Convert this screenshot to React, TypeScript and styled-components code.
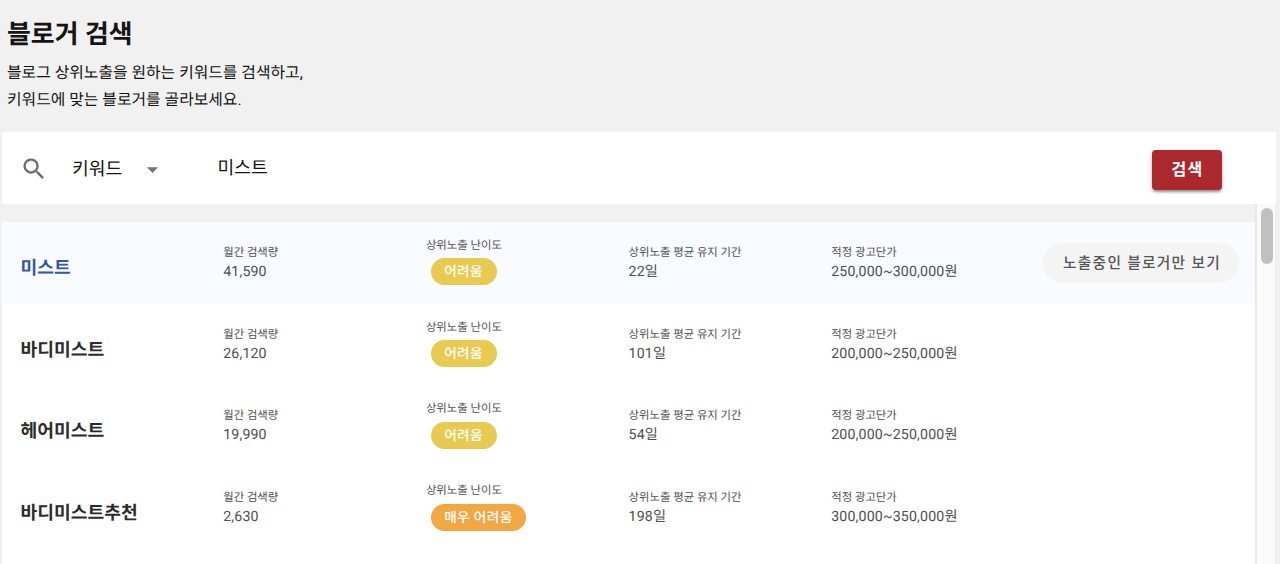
import React from "react";
import styled, { createGlobalStyle } from "styled-components";

const Global = createGlobalStyle`
  * { box-sizing: border-box; }
  html, body { margin: 0; height: 100%; overflow: hidden; background: #f1f1f1; }
  body {
    font-family: Roboto, "Noto Sans CJK KR", sans-serif;
    color: #151515;
    text-rendering: geometricPrecision;
  }
`;

const Page = styled.main`
  height: 564px;
  display: flex;
  flex-direction: column;
  padding: 0 4px 0 2px;
  overflow: hidden;
`;

const Header = styled.header`
  flex: none;
  height: 132px;
  padding: 16px 0 0 5px;
`;

const Title = styled.h1`
  margin: 0;
  font-size: 25.9px;
  line-height: 38px;
  font-weight: 700;
`;

const Lead = styled.p`
  margin: 5px 0 0;
  font-size: 15.85px;
  line-height: 27px;
`;

const SearchBar = styled.section`
  flex: none;
  height: 72px;
  display: flex;
  align-items: center;
  padding: 0 54px 0 18px;
  background: #fff;
`;

const SearchIcon = styled.svg`
  width: 28px;
  height: 28px;
  margin-top: 2px;
  fill: #6b6b6b;
`;

const TypeSelect = styled.div`
  display: flex;
  align-items: center;
  justify-content: space-between;
  width: 94px;
  margin-left: 24px;
  padding-top: 4px;
  font-size: 18.2px;
  line-height: 28px;
`;

const Caret = styled.svg`
  width: 27px;
  height: 27px;
  margin-bottom: 2px;
  fill: #757575;
`;

const Query = styled.div`
  flex: 1;
  margin-left: 51.5px;
  padding-top: 1px;
  font-size: 18.2px;
  line-height: 28px;
`;

const SearchButton = styled.button`
  width: 70px;
  height: 40px;
  margin-top: 4px;
  padding: 0 0 0 1px;
  border: 0;
  border-radius: 4px;
  background: #ab282d;
  color: #fff;
  font: 700 16px/40px Roboto, "Noto Sans CJK KR", sans-serif;
  letter-spacing: 1.4px;
  box-shadow: 0 3px 2px -1px rgba(0, 0, 0, 0.2), 0 2px 3px rgba(0, 0, 0, 0.2), 0 1px 6px rgba(0, 0, 0, 0.12);
`;

const Results = styled.section`
  flex: 1;
  min-height: 0;
  display: flex;
  overflow: hidden;
`;

const List = styled.div`
  flex: 1;
  display: flex;
  flex-direction: column;
  padding-top: 18px;
`;

const Rows = styled.div`
  flex: 1;
  background: #fff;
`;

const ScrollTrack = styled.div`
  width: 21px;
  padding: 4px 0 0 4px;
  background: #fafafa;
  border-left: 2px solid #e8e8e8;
  border-right: 1px solid #ececec;
`;

const ScrollThumb = styled.div`
  width: 12px;
  height: 56px;
  border-radius: 6px;
  background: #c0c0c0;
`;

const Row = styled.article<{ $active?: boolean }>`
  display: grid;
  grid-template-columns: repeat(5, 202.7px) 1fr;
  align-items: center;
  height: 81.75px;
  padding: 0 16px 0 18.5px;
  background: ${(p) => (p.$active ? "#f8fbff" : "#fff")};
  color: ${(p) => (p.$active ? "#3558a8" : "#2c2c2c")};
`;

const Keyword = styled.h2`
  margin: 0;
  padding-top: 12px;
  font-size: 18.2px;
  line-height: 28px;
  font-weight: 700;
`;

const Cell = styled.div`
  color: #505050;
`;

const Label = styled.div`
  font-size: 11.37px;
  line-height: 18px;
`;

const Value = styled.div`
  font-size: 14.2px;
  line-height: 22px;
  letter-spacing: 0.15px;
`;

const Badge = styled.span<{ $severe?: boolean }>`
  display: block;
  width: fit-content;
  height: 27px;
  margin: 4.5px 0 4.5px 5px;
  padding: 0 13.5px 0 13.3px;
  border-radius: 14px;
  background: ${(p) => (p.$severe ? "#f1a843" : "#e9ca50")};
  color: #fff;
  font-size: 13.65px;
  line-height: 28px;
  font-weight: 500;
  letter-spacing: 0.4px;
`;

const FilterButton = styled.button`
  justify-self: end;
  width: 196px;
  height: 40px;
  padding: 0 0 0 2px;
  border: 0;
  border-radius: 20px;
  background: #f4f4f4;
  color: #555;
  font: 500 14.7px/40px Roboto, "Noto Sans CJK KR", sans-serif;
  letter-spacing: 1.3px;
  white-space: nowrap;
`;

type KeywordStats = {
  name: string;
  volume: string;
  level: string;
  days: string;
  price: string;
};

const keywords: KeywordStats[] = [
  { name: "미스트", volume: "41,590", level: "어려움", days: "22일", price: "250,000~300,000원" },
  { name: "바디미스트", volume: "26,120", level: "어려움", days: "101일", price: "200,000~250,000원" },
  { name: "헤어미스트", volume: "19,990", level: "어려움", days: "54일", price: "200,000~250,000원" },
  { name: "바디미스트추천", volume: "2,630", level: "매우 어려움", days: "198일", price: "300,000~350,000원" },
];

function Metric({ label, value }: { label: string; value: string }) {
  return (
    <Cell>
      <Label>{label}</Label>
      <Value>{value}</Value>
    </Cell>
  );
}

export default function App() {
  return (
    <>
      <Global />
      <Page lang="ko">
        <Header>
          <Title>블로거 검색</Title>
          <Lead>
            블로그 상위노출을 원하는 키워드를 검색하고,
            <br />
            키워드에 맞는 블로거를 골라보세요.
          </Lead>
        </Header>
        <SearchBar>
          <SearchIcon viewBox="0 0 24 24">
            <path d="M15.5 14h-.79l-.28-.27C15.41 12.59 16 11.11 16 9.5 16 5.91 13.09 3 9.5 3S3 5.91 3 9.5 5.91 16 9.5 16c1.61 0 3.09-.59 4.23-1.57l.27.28v.79l5 4.99L20.49 19l-4.99-5zm-6 0C7.01 14 5 11.99 5 9.5S7.01 5 9.5 5 14 7.01 14 9.5 11.99 14 9.5 14z" />
          </SearchIcon>
          <TypeSelect>
            키워드
            <Caret viewBox="0 0 24 24">
              <path d="M7 10l5 5 5-5z" />
            </Caret>
          </TypeSelect>
          <Query>미스트</Query>
          <SearchButton>검색</SearchButton>
        </SearchBar>
        <Results>
          <List>
            <Rows>
              {keywords.map((k, i) => (
                <Row key={k.name} $active={i === 0}>
                  <Keyword>{k.name}</Keyword>
                  <Metric label="월간 검색량" value={k.volume} />
                  <Cell>
                    <Label>상위노출 난이도</Label>
                    <Badge $severe={k.level !== "어려움"}>{k.level}</Badge>
                  </Cell>
                  <Metric label="상위노출 평균 유지 기간" value={k.days} />
                  <Metric label="적정 광고단가" value={k.price} />
                  {i === 0 && <FilterButton>노출중인 블로거만 보기</FilterButton>}
                </Row>
              ))}
            </Rows>
          </List>
          <ScrollTrack>
            <ScrollThumb />
          </ScrollTrack>
        </Results>
      </Page>
    </>
  );
}
